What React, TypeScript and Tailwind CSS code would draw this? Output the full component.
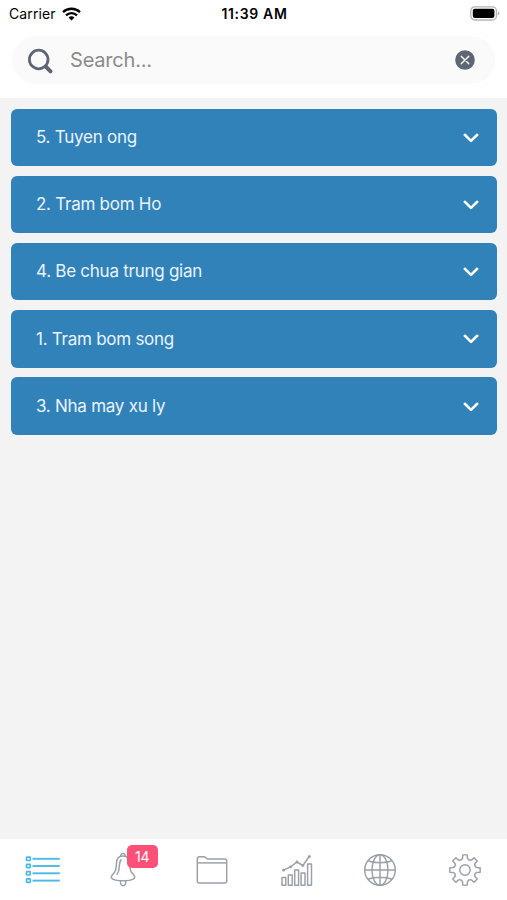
import React, { useState } from 'react';
import { clsx } from 'clsx';

const stations = [
  '5. Tuyen ong',
  '2. Tram bom Ho',
  '4. Be chua trung gian',
  '1. Tram bom song',
  '3. Nha may xu ly',
];

function StatusBar() {
  return (
    <div className="grid h-[27px] grid-cols-3 items-center pl-[9px] pr-[7px] text-black">
      <div className="flex items-center gap-1.5">
        <span className="text-[14px] tracking-[0.1px]">Carrier</span>
        <svg width="19" height="14" viewBox="0 0 19 14" fill="none" stroke="black" strokeWidth="2.3">
          <path d="M1 5.2C5.8.6 13.2.6 18 5.2" />
          <path d="M4 8.3c3.1-3 7.9-3 11 0" />
          <path d="M6.5 10.4c1.8-1.7 4.2-1.7 6 0L9.5 13.5z" fill="black" stroke="none" />
        </svg>
      </div>
      <span className="text-center text-[14px] font-semibold tracking-[0.65px]">11:39 AM</span>
      <svg className="justify-self-end" width="30" height="15" viewBox="0 0 30 15">
        <rect x="0.8" y="0.8" width="25.6" height="13.2" rx="4" fill="white" stroke="#b5b5b5" strokeWidth="1.3" />
        <rect x="2.8" y="2.8" width="21.6" height="9.2" rx="2" fill="black" />
        <path d="M27.8 5.2c2.2 1 2.2 3.4 0 4.4z" fill="#b5b5b5" />
      </svg>
    </div>
  );
}

function SearchBar() {
  const [query, setQuery] = useState('');

  return (
    <div className="mx-3 mt-[9px] flex h-12 items-center rounded-3xl bg-[#fafafa] pl-[15px] pr-5">
      <svg className="mt-px shrink-0" width="26" height="26" viewBox="0 0 26 26" fill="none" stroke="#5d6675" strokeLinecap="round">
        <circle cx="11.7" cy="11.5" r="9.3" strokeWidth="2.8" />
        <path d="M19.5 19.3l4 4" strokeWidth="4" />
      </svg>
      <input
        type="text"
        aria-label="Search"
        className="ml-[17px] min-w-0 flex-1 bg-transparent text-[20px] tracking-[-0.2px] text-gray-800 outline-none placeholder:text-[#8b8b8b]"
        placeholder="Search..."
        value={query}
        onChange={(e) => setQuery(e.target.value)}
      />
      <button type="button" aria-label="Clear" onClick={() => setQuery('')}>
        <svg width="20" height="20" viewBox="0 0 20 20">
          <circle cx="10" cy="10" r="9.8" fill="#5d6675" />
          <path d="M6.2 6.2l7.6 7.6M13.8 6.2l-7.6 7.6" stroke="white" strokeWidth="1.4" strokeLinecap="round" />
        </svg>
      </button>
    </div>
  );
}

function StationRow({ label }: { label: string }) {
  return (
    <button type="button" className="flex h-[57.4px] w-full items-center justify-between rounded-md bg-[#3182b9] pl-[25px] pr-[18px] pt-px text-left text-white">
      <span className="text-[17px] tracking-[-0.26px] text-[#eaf4fc]">{label}</span>
      <svg width="16" height="10" viewBox="0 0 16 10" fill="none" stroke="white" strokeWidth="2.6" strokeLinecap="round" strokeLinejoin="round">
        <path d="M1.8 1.8L8 7.9l6.2-6.1" />
      </svg>
    </button>
  );
}

function ListIcon() {
  return (
    <g stroke="#4bb8ea">
      {[8.8, 16, 23.3, 30.6].map((y) => (
        <g key={y}>
          <rect x="4.5" y={y - 1.7} width="3.8" height="3.4" rx="0.6" strokeWidth="1.7" />
          <path d={`M10.5 ${y}h27.3`} strokeWidth="1.9" />
        </g>
      ))}
    </g>
  );
}

function BellIcon() {
  return (
    <>
      <path d="M13.6 6.3C13.3 2.5 18.7 2.5 18.4 6.3" />
      <path d="M16 6C11.5 6 9.6 9 9.5 13C9.3 19 8.8 21.5 4.9 25.5C2.9 28.2 6 30.8 16 30.8S29.1 28.2 27.1 25.5C23.2 21.5 22.7 19 22.5 13C22.4 9 20.5 6 16 6z" />
      <path d="M13.3 31C13.3 37.2 18.9 37.2 18.9 31" />
      <path d="M14.6 9.5C11.5 11 12.9 17.5 11.4 21.5L9.8 24.7" />
    </>
  );
}

function FolderIcon() {
  return (
    <>
      <path d="M6.3 31V8.600C6.3 7.3 7.2 6.7 8.5 6.7H12.8C14.9 6.7 14.8 9 16.900 9H33.5C35 9 35.7 9.8 35.7 11.2V31C35.7 32.4 35 33 33.6 33H8.4C7 33 6.3 32.4 6.3 31z" />
      <path d="M6.3 12.9H35.7" />
    </>
  );
}

function ChartIcon() {
  return (
    <>
      <path d="M6 35.3V27.5H9.8V35.3zM12.3 35.3V25H16.2V35.3zM18.7 35.3V20H22.6V35.3zM25.1 35.3V23H29V35.3zM31.6 35.3V14H35.5V35.3z" />
      <path d="M7.6 20.2L14.6 16.9L20.9 12L26.9 15.5L33.3 6.5" />
      <g fill="#9aa0a8" stroke="none">
        <circle cx="7.6" cy="20.2" r="1.4" />
        <circle cx="14.6" cy="16.9" r="1.4" />
        <circle cx="20.9" cy="12" r="1.4" />
        <circle cx="26.9" cy="15.5" r="1.4" />
        <circle cx="33.3" cy="6.5" r="1.5" />
      </g>
    </>
  );
}

function GlobeIcon() {
  return (
    <>
      <circle cx="20" cy="20" r="15.3" />
      <ellipse cx="20" cy="20" rx="8" ry="15.3" />
      <path d="M20 4.7V35.3M4.7 20H35.3M8 10.5C14 13.4 26 13.4 32 10.5M8 29.5C14 26.6 26 26.6 32 29.5" />
    </>
  );
}

// Eight teeth around the centre of a 40x40 box
const gearTeeth = Array.from({ length: 8 }, (_, i) => {
  const point = (r: number, deg: number) => {
    const a = ((i * 45 + deg) * Math.PI) / 180;
    return `${(20 + r * Math.cos(a)).toFixed(2)} ${(20 + r * Math.sin(a)).toFixed(2)}`;
  };
  return `${point(11.8, -12)} L${point(15.3, -8.5)} L${point(15.3, 8.5)} L${point(11.8, 12)} Q${point(9.9, 22.5)} ${point(11.8, 33)}`;
});

function GearIcon() {
  return (
    <>
      <path d={`M${gearTeeth.join(' L')}z`} />
      <circle cx="20" cy="20" r="5.2" />
    </>
  );
}

const tabs = [
  { name: 'List', icon: <ListIcon /> },
  { name: 'Alarms', icon: <BellIcon />, badge: 14 },
  { name: 'Files', icon: <FolderIcon /> },
  { name: 'Charts', icon: <ChartIcon /> },
  { name: 'Map', icon: <GlobeIcon /> },
  { name: 'Settings', icon: <GearIcon /> },
];

function TabBar() {
  return (
    <nav className="grid h-[61px] grid-cols-6 bg-white">
      {tabs.map((tab) => (
        <button key={tab.name} type="button" aria-label={tab.name} className="flex items-center justify-center">
          <span className="relative">
            <svg width="40" height="40" viewBox="0 0 40 40" fill="none" stroke="#9aa0a8" strokeWidth="1.45" strokeLinejoin="round">
              {tab.icon}
            </svg>
            {tab.badge && (
              <span className="absolute -top-[5px] left-5 flex h-[23px] w-[31px] items-center justify-center rounded-[5px] bg-[#ff5078] text-[14px] text-white">
                {tab.badge}
              </span>
            )}
          </span>
        </button>
      ))}
    </nav>
  );
}

export default function App() {
  return (
    <div className={clsx('flex h-screen flex-col bg-[#f3f3f3]', "font-['Inter','Liberation_Sans',sans-serif]")}>
      <header className="h-[98px] bg-white">
        <StatusBar />
        <SearchBar />
      </header>
      <main className="flex flex-1 flex-col gap-[9.8px] pl-[11px] pr-2.5 pt-[10.6px]">
        {stations.map((label) => (
          <StationRow key={label} label={label} />
        ))}
      </main>
      <TabBar />
    </div>
  );
}
